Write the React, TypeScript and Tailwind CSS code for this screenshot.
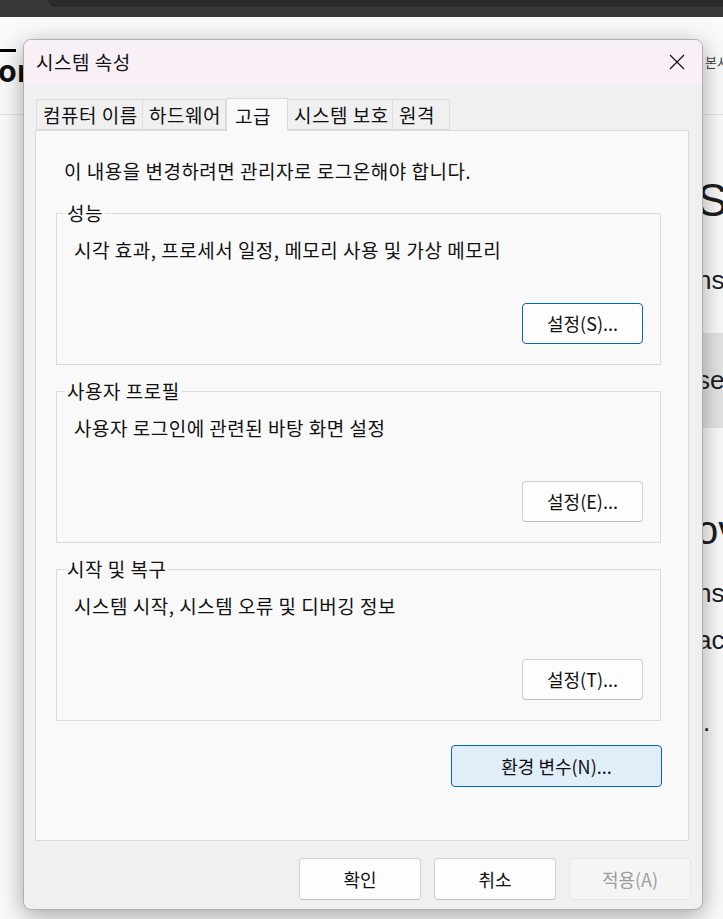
import React from 'react';

const FONT = "font-['Noto_Sans_CJK_KR','Noto_Sans',sans-serif]";

interface BtnProps {
  children: React.ReactNode;
  className?: string;
  variant?: 'normal' | 'focus' | 'primary' | 'disabled';
}

const Button: React.FC<BtnProps> = ({ children, className = '', variant = 'normal' }) => {
  const look = {
    normal: 'bg-[#fdfdfd] border-[#d0d0d0] border-b-[#bcbcbc] text-[#111]',
    focus: 'bg-[#fdfdfd] border-[#0067c0] text-[#111]',
    primary: 'bg-[#e0eef9] border-[#0067c0] text-[#111]',
    disabled: 'bg-[#f5f5f5] border-[#e5e5e5] text-[#9d9d9d]',
  }[variant];
  return (
    <div className={`flex items-center justify-center rounded-[4px] border text-[18px] tracking-normal ${look} ${className}`}>
      {children}
    </div>
  );
};

interface GroupProps {
  title: string;
  text: string;
  button: string;
  focused?: boolean;
  className?: string;
}

const GroupBox: React.FC<GroupProps> = ({ title, text, button, focused, className = '' }) => (
  <div className={`relative h-[152px] border border-[#dcdcdc] ${className}`}>
    <span className="absolute -top-[13px] left-[8px] bg-[#f9f9f9] px-[2px] leading-[24px]">{title}</span>
    <div className="pl-[17px] pt-[24px] leading-[24px]">{text}</div>
    <div className="flex justify-end pr-[17px] mt-[41px]">
      <Button variant={focused ? 'focus' : 'normal'} className="w-[121px] h-[41px]">
        {button}
      </Button>
    </div>
  </div>
);

const tabs = [
  { label: '컴퓨터 이름', w: 'w-[107px]' },
  { label: '하드웨어', w: 'w-[84px]' },
  { label: '고급', w: 'w-[62px]', active: true },
  { label: '시스템 보호', w: 'w-[106px]' },
  { label: '원격', w: 'w-[58px]' },
];

export default function App() {
  return (
    <div className={`relative w-[723px] h-[919px] overflow-hidden bg-[#fafafa] text-[#111] ${FONT}`}>
      {/* browser chrome behind */}
      <div className="h-[17px] bg-[#393939] flex">
        <div className="ml-[48px] flex-1 h-[7px] bg-[#2b2b2b] rounded-bl-[10px]" />
      </div>

      {/* page behind the dialog */}
      <div className="h-[98px] border-b border-[#e3e3e3] flex justify-between">
        <div className="pt-[32px]">
          <div className="w-[16px] h-[3px] bg-black" />
          <div className="-ml-[2px] mt-[2px] text-[30px] font-bold leading-[30px] text-[#111]">on</div>
        </div>
        <div className="pt-[36px] text-[13px] text-[#444] leading-[18px] w-[18px] overflow-hidden whitespace-nowrap">본서</div>
      </div>
      <div className="flex justify-end">
        <div className="w-[23px] overflow-hidden whitespace-nowrap text-[#1d1d1d] font-['Liberation_Sans',sans-serif]">
          <div className="mt-[60px] text-[46px] leading-[50px] -ml-[3px]">St</div>
          <div className="mt-[40px] text-[26px] leading-[30px] -ml-[3px]">ns</div>
          <div className="mt-[38px] h-[95px] bg-[#e4e4e4] flex items-center text-[26px]">
            <span className="-ml-[3px]">se</span>
          </div>
          <div className="mt-[80px] text-[40px] leading-[44px] -ml-[4px]">ov</div>
          <div className="mt-[26px] text-[26px] leading-[30px] -ml-[3px]">ns</div>
          <div className="mt-[17px] text-[26px] leading-[30px] -ml-[3px]">ac</div>
          <div className="mt-[52px] text-[26px] leading-[30px] ml-[3px]">.</div>
        </div>
      </div>

      {/* dialog window */}
      <div className="absolute left-[23px] top-[39px] w-[680px] h-[871px] rounded-[8px] border border-[#b0b0b0] bg-[#f0f0f0] shadow-[0_6px_24px_rgba(0,0,0,0.35)] text-[19px] tracking-[0.5px] flex flex-col overflow-hidden">
        <div className="h-[44px] bg-[#f9eff7] flex items-center justify-between pl-[12px] pr-[16px]">
          <span className="leading-[24px]">시스템 속성</span>
          <svg width="16" height="16" viewBox="0 0 16 16" className="mr-[1px]">
            <path d="M1 1 L15 15 M15 1 L1 15" stroke="#111" strokeWidth="1.2" fill="none" />
          </svg>
        </div>

        <div className="pl-[11px] pr-[13px] pt-[13px] flex flex-col">
          <div className="flex items-end h-[33px] pl-[1px]">
            {tabs.map((t) =>
              t.active ? (
                <div
                  key={t.label}
                  className={`${t.w} h-[33px] -mb-px z-10 bg-[#f9f9f9] border border-b-0 border-[#dadada] pl-[8px] pt-[3px] leading-[28px]`}
                >
                  {t.label}
                </div>
              ) : (
                <div
                  key={t.label}
                  className={`${t.w} h-[31px] -ml-px first:ml-0 bg-[#f0f0f0] border border-[#dddddd] pl-[6px] leading-[29px] whitespace-nowrap`}
                >
                  {t.label}
                </div>
              )
            )}
          </div>

          <div className="h-[711px] bg-[#f9f9f9] border border-[#d9d9d9] flex flex-col pl-[20px] pr-[27px]">
            <div className="pl-[8px] pt-[28px] leading-[24px]">이 내용을 변경하려면 관리자로 로그온해야 합니다.</div>
            <GroupBox className="mt-[30px]" title="성능" text="시각 효과, 프로세서 일정, 메모리 사용 및 가상 메모리" button="설정(S)..." focused />
            <GroupBox className="mt-[26px]" title="사용자 프로필" text="사용자 로그인에 관련된 바탕 화면 설정" button="설정(E)..." />
            <GroupBox className="mt-[26px]" title="시작 및 복구" text="시스템 시작, 시스템 오류 및 디버깅 정보" button="설정(T)..." />
            <div className="flex justify-end mt-[24px] -mr-[1px]">
              <Button variant="primary" className="w-[211px] h-[42px]">환경 변수(N)...</Button>
            </div>
          </div>
        </div>

        <div className="flex justify-end gap-[13px] pr-[11px] mt-[17px]">
          <Button className="w-[122px] h-[42px]">확인</Button>
          <Button className="w-[122px] h-[42px]">취소</Button>
          <Button variant="disabled" className="w-[122px] h-[42px]">적용(A)</Button>
        </div>
      </div>
    </div>
  );
}
